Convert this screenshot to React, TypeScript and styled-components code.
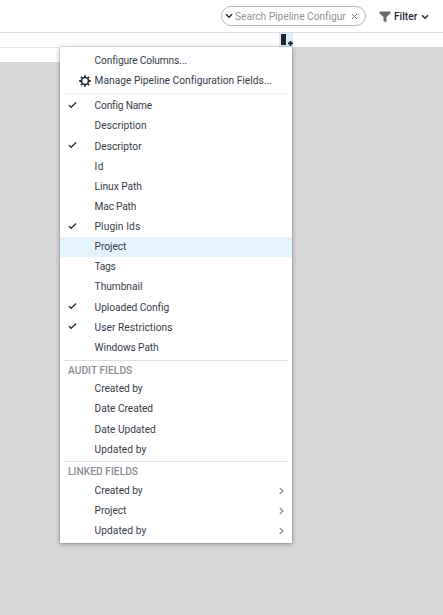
import React from "react";
import styled, { createGlobalStyle } from "styled-components";

const GlobalStyle = createGlobalStyle`
  * { box-sizing: border-box; }
  body { margin: 0; background: #d7d7d7; }
`;

const Page = styled.div`
  position: relative;
  height: 615px;
  overflow: hidden;
  display: flex;
  flex-direction: column;
  background: #d7d7d7;
  color: #383c47;
  font: 10.2px/20px Roboto, "Noto Sans", sans-serif;
  white-space: nowrap;

  svg { flex: none; }
`;

const Header = styled.header`
  flex: none;
  height: 33px;
  display: flex;
  align-items: center;
  justify-content: flex-end;
  padding-right: 14px;
  background: #fff;
  border-bottom: 1px solid #dcdcdc;
`;

const SearchBox = styled.div`
  display: flex;
  align-items: center;
  width: 145px;
  height: 20px;
  padding: 0 7px 0 3px;
  border: 1px solid #b5b5b5;
  border-radius: 10px;
  color: #929298;
`;

const Query = styled.span`
  flex: 1;
  margin-left: 2px;
  padding-top: 1px;
  letter-spacing: -0.02px;
`;

const FilterButton = styled.div`
  display: flex;
  align-items: center;
  margin-left: 13px;
  padding-top: 1px;
  color: #252933;
  font-weight: 500;
`;

const FilterLabel = styled.span`
  width: 24px;
  margin: 0 3px 0 3px;
`;

const ColumnBar = styled.div`
  flex: none;
  height: 14px;
  padding-left: 279px;
  background: #fff;
`;

const ColumnButton = styled.div`
  width: 14px;
  height: 14px;
  background: #dceef8;

  svg { display: block; }
`;

const GridHeader = styled.div`
  flex: none;
  width: 280px;
  height: 15px;
  background: #fff;
  border-top: 1px solid #e9e9e9;
`;

const Menu = styled.div`
  position: absolute;
  left: 60px;
  top: 47px;
  width: 232px;
  height: 496px;
  padding-top: 3.5px;
  background: #fff;
  box-shadow: 0 1px 5px rgba(0, 0, 0, 0.35), 0 0 1px rgba(0, 0, 0, 0.4);
`;

const Row = styled.div<{ $active?: boolean }>`
  display: grid;
  grid-template-columns: 34.6px 1fr 13px;
  align-items: center;
  height: 20.13px;
  background: ${(p) => (p.$active ? "#e4f4fc" : "transparent")};
`;

const IconCell = styled.span<{ $end?: boolean }>`
  display: flex;
  justify-content: ${(p) => (p.$end ? "flex-end" : "flex-start")};
  padding: ${(p) => (p.$end ? "0 4px 0 0" : "0 0 3px 8px")};
`;

const Label = styled.span<{ $spacing: number }>`
  letter-spacing: ${(p) => p.$spacing}px;
`;

const Arrow = styled.span`
  display: flex;
`;

const Divider = styled.div<{ $top: number; $bottom: number; $light?: boolean }>`
  height: 1px;
  margin: ${(p) => p.$top}px 4px ${(p) => p.$bottom}px;
  background: ${(p) => (p.$light ? "#eeeeee" : "#dfdfdf")};
`;

const Heading = styled.div`
  height: 17.3px;
  padding-left: 8px;
  line-height: 18px;
  font-weight: 500;
  color: #8b8c92;
  letter-spacing: 0.04px;
`;

const Check = () => (
  <svg width="9" height="8" viewBox="0 0 9 8" fill="none">
    <path d="M1 4.2 3.2 6.2 8 1.5" stroke="#30343f" strokeWidth="1.5" />
  </svg>
);

const Down = () => (
  <svg width="8" height="6" viewBox="0 0 8 6" fill="none">
    <path d="M1 1.2 4 4.3 7 1.2" stroke="#252933" strokeWidth="1.4" />
  </svg>
);

const Gear = () => (
  <svg width="12" height="12" viewBox="0 0 12 12" fill="none" stroke="#292d38">
    <circle cx="6" cy="6" r="3.5" strokeWidth="1.7" />
    <path
      d="M6 .2v1.800M6 10v1.800M.2 6H2M10 6h1.800M1.900 1.900l1.300 1.300M8.800 8.800l1.300 1.300M10.100 1.900 8.800 3.200M3.200 8.800l-1.300 1.300"
      strokeWidth="1.9"
    />
  </svg>
);

const Chevron = () => (
  <svg width="5" height="8" viewBox="0 0 5 8" fill="none">
    <path d="M.8 1 3.9 4 .8 7" stroke="#92949a" strokeWidth="1.4" />
  </svg>
);

type Item = {
  label: string;
  spacing?: number;
  icon?: "check" | "gear";
  active?: boolean;
  submenu?: boolean;
};

const actions: Item[] = [
  { label: "Configure Columns...", spacing: -0.15 },
  { label: "Manage Pipeline Configuration Fields...", icon: "gear", spacing: 0.01 },
];

const fields: Item[] = [
  { label: "Config Name", icon: "check", spacing: -0.18 },
  { label: "Description", spacing: 0.04 },
  { label: "Descriptor", icon: "check", spacing: 0.02 },
  { label: "Id", spacing: 0.3 },
  { label: "Linux Path" },
  { label: "Mac Path", spacing: -0.2 },
  { label: "Plugin Ids", icon: "check", spacing: 0.1 },
  { label: "Project", active: true },
  { label: "Tags", spacing: -0.3 },
  { label: "Thumbnail" },
  { label: "Uploaded Config", icon: "check", spacing: -0.06 },
  { label: "User Restrictions", icon: "check", spacing: 0.04 },
  { label: "Windows Path", spacing: -0.08 },
];

const audit: Item[] = [
  { label: "Created by" },
  { label: "Date Created" },
  { label: "Date Updated" },
  { label: "Updated by", spacing: 0.06 },
];

const linked: Item[] = [
  { label: "Created by", submenu: true },
  { label: "Project", submenu: true },
  { label: "Updated by", submenu: true, spacing: 0.06 },
];

const Rows = ({ items }: { items: Item[] }) => (
  <>
    {items.map((item) => (
      <Row key={item.label} $active={item.active}>
        <IconCell $end={item.icon === "gear"}>
          {item.icon === "check" && <Check />}
          {item.icon === "gear" && <Gear />}
        </IconCell>
        <Label $spacing={item.spacing ?? -0.04}>{item.label}</Label>
        {item.submenu && <Arrow><Chevron /></Arrow>}
      </Row>
    ))}
  </>
);

export default function App() {
  return (
    <Page>
      <GlobalStyle />
      <Header>
        <SearchBox>
          <Down />
          <Query>Search Pipeline Configur</Query>
          <svg width="7" height="7" viewBox="0 0 7 7">
            <path d="m1 1 5 5M6 1 1 6" stroke="#777" strokeWidth="1" />
          </svg>
        </SearchBox>
        <FilterButton>
          <svg width="12" height="12" viewBox="0 0 12 12">
            <path d="M.5.5h11v1.800L7.500 6v5.500l-3-1.500V6l-4-3.700z" fill="#6b6b6e" />
          </svg>
          <FilterLabel>Filter</FilterLabel>
          <Down />
        </FilterButton>
      </Header>
      <ColumnBar>
        <ColumnButton>
          <svg width="14" height="14" viewBox="0 0 14 14">
            <path d="M2 1h5v11H2zM10.500 8h2v1.500H14v1.800h-1.500v1.400h-2v-1.400H9V9.500h1.500z" fill="#202634" />
          </svg>
        </ColumnButton>
      </ColumnBar>
      <GridHeader />
      <Menu>
        <Rows items={actions} />
        <Divider $top={2.5} $bottom={2} $light />
        <Rows items={fields} />
        <Divider $top={2.1} $bottom={1} />
        <Heading>AUDIT FIELDS</Heading>
        <Rows items={audit} />
        <Divider $top={1.5} $bottom={1} />
        <Heading>LINKED FIELDS</Heading>
        <Rows items={linked} />
      </Menu>
    </Page>
  );
}
